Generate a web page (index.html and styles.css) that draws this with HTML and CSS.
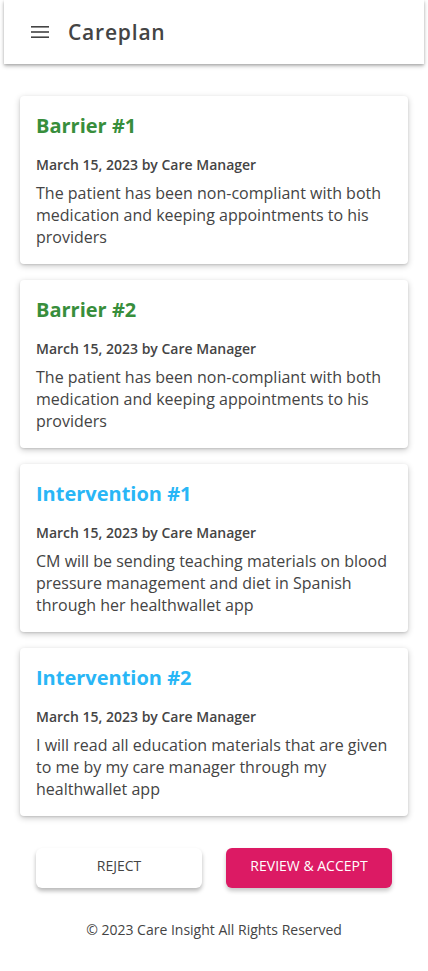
FILE: index.html
```html
<!DOCTYPE html>
<html>
<head>
<meta charset="utf-8">
<link rel="stylesheet" href="styles.css">
</head>
<body>
<header class="appbar">
  <svg class="menu" width="18" height="12" viewBox="0 0 18 12"><rect y="0" width="18" height="1.6" fill="#444"/><rect y="5.2" width="18" height="1.6" fill="#444"/><rect y="10.4" width="18" height="1.6" fill="#444"/></svg>
  <h1 class="title">Careplan</h1>
</header>
<main class="content">
  <section class="card">
    <h2 class="card-title barrier">Barrier #1</h2>
    <div class="meta">March 15, 2023 by Care Manager</div>
    <p class="body">The patient has been non-compliant with both medication and keeping appointments to his providers</p>
  </section>
  <section class="card">
    <h2 class="card-title barrier">Barrier #2</h2>
    <div class="meta">March 15, 2023 by Care Manager</div>
    <p class="body">The patient has been non-compliant with both medication and keeping appointments to his providers</p>
  </section>
  <section class="card">
    <h2 class="card-title intervention">Intervention #1</h2>
    <div class="meta">March 15, 2023 by Care Manager</div>
    <p class="body">CM will be sending teaching materials on blood pressure management and diet in Spanish through her healthwallet app</p>
  </section>
  <section class="card">
    <h2 class="card-title intervention">Intervention #2</h2>
    <div class="meta">March 15, 2023 by Care Manager</div>
    <p class="body">I will read all education materials that are given to me by my care manager through my healthwallet app</p>
  </section>
  <div class="actions">
    <button class="btn btn-reject">REJECT</button>
    <button class="btn btn-accept">REVIEW &amp; ACCEPT</button>
  </div>
  <footer class="footer">© 2023 Care Insight All Rights Reserved</footer>
</main>
</body>
</html>
```
FILE: styles.css
```css
* { box-sizing: border-box; }
html, body { margin: 0; padding: 0; background: #fff; }
body {
  font-family: "Open Sans", "Noto Sans", sans-serif;
  color: #444;
}
.appbar {
  margin: 0 4px;
  height: 64px;
  display: flex;
  align-items: center;
  padding-left: 27px;
  padding-bottom: 1px;
  gap: 19px;
  background: #fff;
  box-shadow: 0 2px 4px rgba(0,0,0,0.28), 0 1px 2px rgba(0,0,0,0.12);
}
.menu { display: block; }
.title {
  margin: 0;
  font-family: "Open Sans", sans-serif;
  font-weight: 600;
  font-size: 21px;
  line-height: 24px;
  letter-spacing: 0.8px;
  color: #444;
}
.content {
  padding: 32px 20px 0;
  display: flex;
  flex-direction: column;
  gap: 16px;
}
.card {
  background: #fff;
  border-radius: 4px;
  padding: 16px;
  box-shadow: 0 2px 6px rgba(0,0,0,0.22), 0 1px 2px rgba(0,0,0,0.1);
  min-height: 168px;
}
.card-title {
  margin: 0;
  font-size: 20px;
  line-height: 28px;
  font-weight: 700;
}
.barrier { color: #388e3c; }
.intervention { color: #29b6f6; }
.meta {
  margin-top: 15px;
  font-size: 14px;
  line-height: 20px;
  font-weight: 600;
  color: #444;
}
.body {
  margin: 7px 0 0;
  font-size: 16px;
  line-height: 22px;
  color: #444;
}
.actions {
  display: flex;
  justify-content: center;
  gap: 24px;
  margin-top: 16px;
}
.btn {
  width: 166px;
  height: 40px;
  padding: 0 0 5px;
  border: none;
  border-radius: 6px;
  font-family: "Open Sans", sans-serif;
  font-size: 14px;
  cursor: pointer;
}
.btn-reject {
  background: #fff;
  color: #444;
  box-shadow: 0 3px 4px rgba(0,0,0,0.28);
}
.btn-accept {
  background: #dc1a64;
  color: #fff;
  box-shadow: 0 3px 4px rgba(0,0,0,0.22);
}
.footer {
  text-align: center;
  font-size: 14px;
  line-height: 20px;
  color: #444;
  margin-top: 16px;
  padding-bottom: 20px;
}
```
